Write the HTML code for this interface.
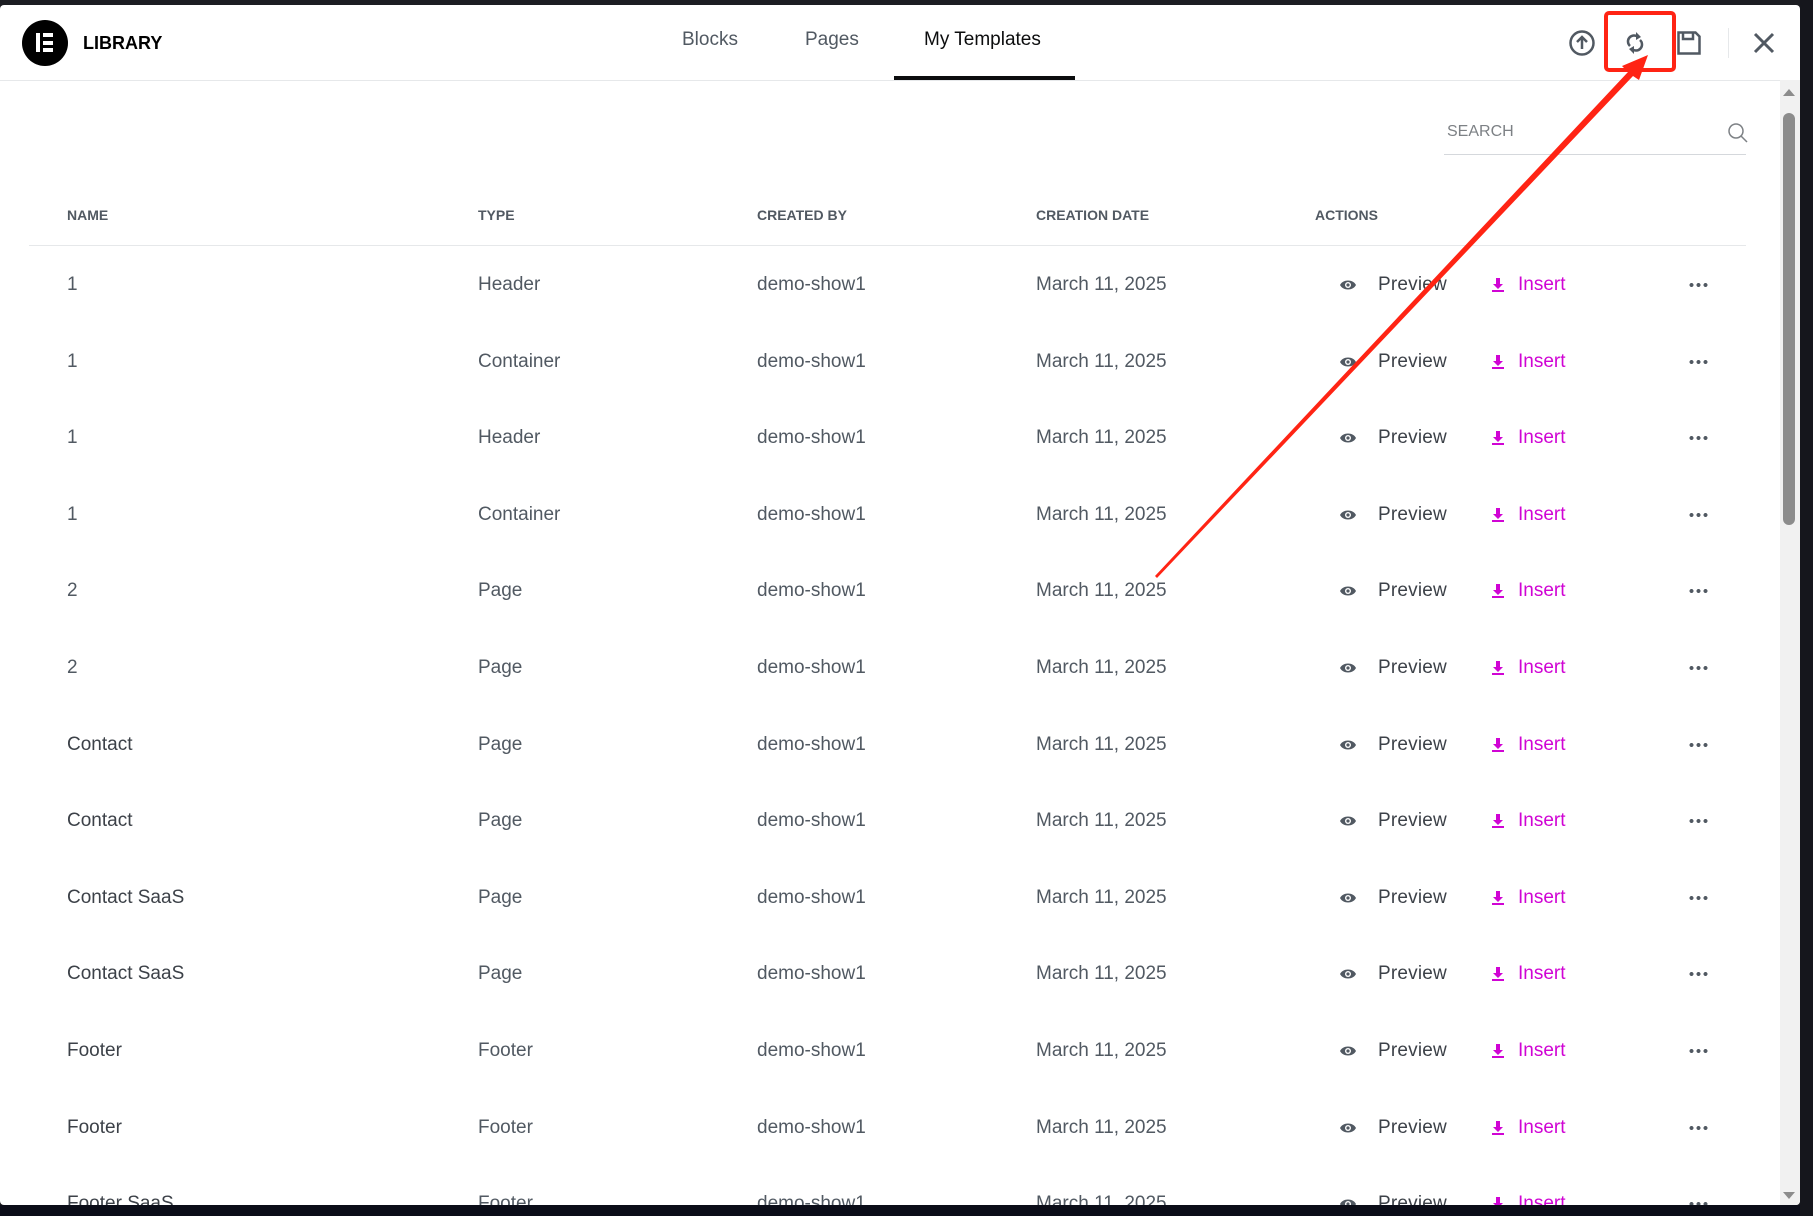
<!DOCTYPE html>
<html><head><meta charset="utf-8"><style>
*{margin:0;padding:0;box-sizing:border-box}
body{width:1813px;height:1216px;background:#1c1d22;position:relative;overflow:hidden;font-family:"Liberation Sans",Arial,sans-serif;color:#515962}
#dlg{position:absolute;left:0;top:5px;width:1800px;height:1200px;background:#fff;border-radius:4px;overflow:hidden}
.a{position:absolute;white-space:nowrap}
.hd{font-size:14px;font-weight:bold;color:#515962;top:202px}
.r{font-size:19px;line-height:22px}
.ins{color:#d004d4}
</style></head><body>
<div style="position:absolute;left:0;top:1205px;width:1813px;height:11px;background:#0b0d18"></div>
<div style="position:absolute;left:1800px;top:0;width:13px;height:1216px;background:#15161c"></div>
<div id="dlg">
<div class="a" style="left:22px;top:15px;width:46px;height:46px;border-radius:50%;background:#000"></div>
<div class="a" style="left:36px;top:28px;width:4px;height:19px;background:#fff"></div>
<div class="a" style="left:43px;top:28px;width:10px;height:4px;background:#fff"></div>
<div class="a" style="left:43px;top:35.5px;width:10px;height:4px;background:#fff"></div>
<div class="a" style="left:43px;top:43px;width:10px;height:4px;background:#fff"></div>
<div class="a" style="left:83px;top:28px;font-size:18px;font-weight:bold;color:#000">LIBRARY</div>
<div class="a" style="left:682px;top:24px;font-size:19px;color:#515962">Blocks</div>
<div class="a" style="left:805px;top:24px;font-size:19px;color:#515962">Pages</div>
<div class="a" style="left:924px;top:24px;font-size:19px;color:#0c0d0e">My Templates</div>
<div class="a" style="left:894px;top:71px;width:181px;height:4px;background:#0c0d0e"></div>
<div class="a" style="left:0;top:75px;width:1800px;height:1px;background:#e6e8ea"></div>
<svg class="a" style="left:1568px;top:24px" width="28" height="28" viewBox="0 0 28 28"><circle cx="14" cy="14" r="11.5" fill="none" stroke="#515962" stroke-width="2.5"/><path d="M14 20V8M9 13l5-5 5 5" fill="none" stroke="#515962" stroke-width="2.5"/></svg>
<svg class="a" style="left:1621px;top:24px" width="28" height="28" viewBox="0 0 28 28"><path d="M9 17A6 6 0 0 1 17 8" fill="none" stroke="#515962" stroke-width="2.5"/><path d="M15 3l5 5-5 3z" fill="#515962"/><path d="M19 11A6 6 0 0 1 11 20" fill="none" stroke="#515962" stroke-width="2.5"/><path d="M13 25l-5-5 5-3z" fill="#515962"/></svg>
<svg class="a" style="left:1676px;top:25px" width="26" height="26" viewBox="0 0 26 26"><path d="M2.5 2.5h17l4 4v17h-21z" fill="none" stroke="#515962" stroke-width="2.5"/><path d="M7 3v6h10V3" fill="none" stroke="#515962" stroke-width="2.5"/></svg>
<div class="a" style="left:1728px;top:23px;width:1px;height:30px;background:#e6e8ea"></div>
<svg class="a" style="left:1753px;top:27px" width="22" height="22" viewBox="0 0 22 22"><path d="M2 2l18 18M20 2L2 20" stroke="#515962" stroke-width="3"/></svg>
<div class="a" style="left:1447px;top:118px;font-size:16px;color:#7d8185">SEARCH</div>
<div class="a" style="left:1444px;top:149px;width:302px;height:1px;background:#d5d8dc"></div>
<svg class="a" style="left:1726px;top:116px" width="24" height="24" viewBox="0 0 24 24"><circle cx="10" cy="10" r="7" fill="none" stroke="#7d8185" stroke-width="1.5"/><path d="M15 15l6 6" stroke="#7d8185" stroke-width="1.5"/></svg>
<div class="a hd" style="left:67px">NAME</div>
<div class="a hd" style="left:478px">TYPE</div>
<div class="a hd" style="left:757px">CREATED BY</div>
<div class="a hd" style="left:1036px">CREATION DATE</div>
<div class="a hd" style="left:1315px">ACTIONS</div>
<div class="a" style="left:29px;top:240px;width:1717px;height:1px;background:#e6e8ea"></div>
<div id="rows"></div>
<div class="a" style="left:1780px;top:75px;width:20px;height:1125px;background:#f1f1f1"></div>
<div class="a" style="left:1783px;top:108px;width:12px;height:412px;background:#8c8c8c;border-radius:6px"></div>
<div class="a" style="left:1783px;top:84px;width:0;height:0;border-left:6px solid transparent;border-right:6px solid transparent;border-bottom:7px solid #8c8c8c"></div>
<div class="a" style="left:1783px;top:1187px;width:0;height:0;border-left:6px solid transparent;border-right:6px solid transparent;border-top:7px solid #8c8c8c"></div>
</div>
<svg class="a" style="left:0;top:0" width="1813" height="1216">
<rect x="1606" y="13" width="68" height="57" rx="3" fill="none" stroke="#ff2414" stroke-width="4"/>
<path d="M1155 576L1628 72L1622 66L1648 55L1639 80L1633 76L1157 578z" fill="#ff2414"/>
</svg>
<script>
var d=[["1","Header"],["1","Container"],["1","Header"],["1","Container"],["2","Page"],["2","Page"],["Contact","Page"],["Contact","Page"],["Contact SaaS","Page"],["Contact SaaS","Page"],["Footer","Footer"],["Footer","Footer"],["Footer SaaS","Footer"]];
var h="";
d.forEach(function(r,i){var y=278+i*76.6-11+2;
h+='<div class="a r" style="left:67px;top:'+y+'px;color:'+(r[0].length>1?'#3c4148':'#515962')+'">'+r[0]+'</div>';
h+='<div class="a r" style="left:478px;top:'+y+'px">'+r[1]+'</div>';
h+='<div class="a r" style="left:757px;top:'+y+'px">demo-show1</div>';
h+='<div class="a r" style="left:1036px;top:'+y+'px">March 11, 2025</div>';
h+='<svg class="a" style="left:1339px;top:'+(y+4)+'px" width="18" height="14" viewBox="0 0 18 14"><path d="M1 7C4 1 14 1 17 7C14 13 4 13 1 7z" fill="#515962"/><circle cx="9" cy="7" r="3" fill="#fff"/><circle cx="9" cy="7" r="1.6" fill="#515962"/></svg>';
h+='<div class="a r" style="left:1378px;top:'+y+'px;color:#3c4148;letter-spacing:0.2px">Preview</div>';
h+='<svg class="a" style="left:1491px;top:'+(y+3)+'px" width="14" height="16" viewBox="0 0 14 16"><path d="M5 1h4v6h3l-5 5-5-5h3z" fill="#d004d4"/><rect x="1" y="13" width="12" height="2" fill="#d004d4"/></svg>';
h+='<div class="a r ins" style="left:1518px;top:'+y+'px">Insert</div>';
h+='<div class="a" style="left:1688px;top:'+(y+9)+'px;width:20px;height:4px;background:radial-gradient(circle,#515962 1.8px,transparent 2.2px) 0 0/7px 4px repeat-x"></div>';
});
document.getElementById("rows").innerHTML=h;
</script>
</body></html>
